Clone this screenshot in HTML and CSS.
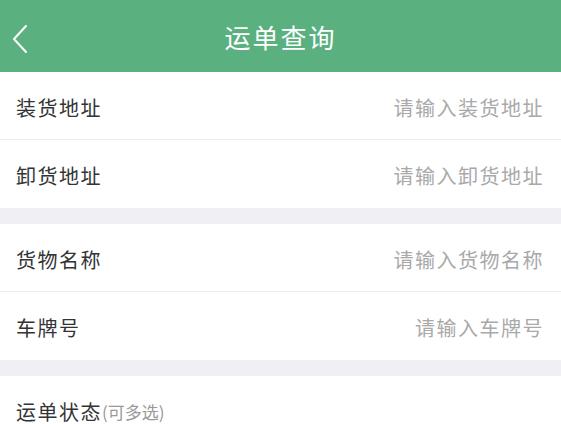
FILE: index.html
```html
<!DOCTYPE html>
<html lang="zh-CN">
<head>
    <meta charset="UTF-8">
    <meta name="viewport" content="width=device-width, initial-scale=1.0">
    <title>运单查询</title>
    <link rel="stylesheet" href="styles.css">
</head>
<body>
    <div class="header">
        <span class="back">
            <svg width="18" height="30" viewBox="0 0 18 30">
                <polyline points="15,2 3,15 15,28" fill="none" stroke="#fff" stroke-width="2" stroke-linecap="round" stroke-linejoin="round"/>
            </svg>
        </span>
        <h1>运单查询</h1>
    </div>

    <!-- 地址 -->
    <div class="group">
        <div class="row">
            <span class="label">装货地址</span>
            <input class="field" type="text" placeholder="请输入装货地址">
        </div>
        <div class="row">
            <span class="label">卸货地址</span>
            <input class="field" type="text" placeholder="请输入卸货地址">
        </div>
    </div>

    <!-- 货物 -->
    <div class="group">
        <div class="row">
            <span class="label">货物名称</span>
            <input class="field" type="text" placeholder="请输入货物名称">
        </div>
        <div class="row">
            <span class="label">车牌号</span>
            <input class="field" type="text" placeholder="请输入车牌号">
        </div>
    </div>

    <!-- 状态 -->
    <div class="group">
        <div class="status">
            <span class="label">运单状态</span><span class="hint">(可多选)</span>
        </div>
    </div>
</body>
</html>
```

FILE: styles.css
```css
body {
    margin: 0;
    background-color: #efeff4;
    font-family: "Noto Sans CJK SC", "Noto Sans", sans-serif;
    color: #333;
}

.header {
    height: 72px;
    background-color: #5bb07f;
    display: flex;
    align-items: center;
    justify-content: center;
    position: relative;
}

.header h1 {
    margin: 0;
    color: #fff;
    font-size: 26px;
    font-weight: normal;
    letter-spacing: 2px;
}

.back {
    position: absolute;
    left: 11px;
    top: 24px;
    height: 30px;
}

.group {
    background-color: #fff;
    margin-bottom: 16px;
}

.group:last-child {
    margin-bottom: 0;
}

.row {
    height: 64px;
    display: flex;
    align-items: center;
    justify-content: space-between;
    padding: 3px 17px 0 16px;
    border-bottom: 1px solid #ebebeb;
}

.row:last-child {
    border-bottom: none;
    height: 65px;
}

.label {
    font-size: 20px;
    letter-spacing: 1.5px;
    color: #333;
}

.field {
    border: none;
    outline: none;
    background: transparent;
    text-align: right;
    font-family: inherit;
    font-size: 20px;
    letter-spacing: 1.5px;
    width: 220px;
    padding: 0;
    color: #333;
}

.field::placeholder {
    color: #a9a9a9;
}

.status {
    height: 70px;
    display: flex;
    align-items: center;
    padding: 0 16px;
}

.hint {
    font-size: 17px;
    color: #999;
}
```
